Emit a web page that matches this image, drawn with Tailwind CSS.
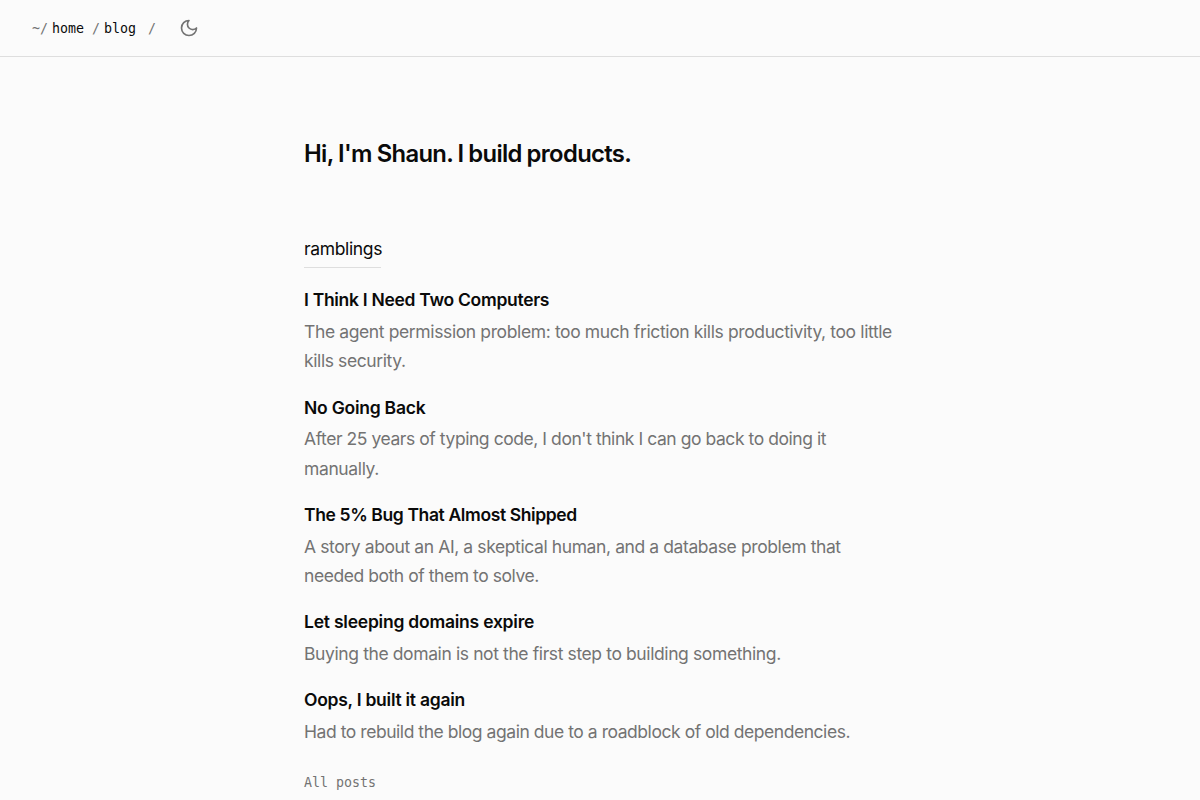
<!DOCTYPE html>
<html lang="en">
<head>
    <meta charset="UTF-8">
    <meta name="viewport" content="width=device-width, initial-scale=1.0">
    <title>Shaun</title>
    <script src="https://cdn.jsdelivr.net/npm/@tailwindcss/browser@4"></script>
</head>
<body class="h-screen overflow-hidden bg-[#fbfbfb] font-['Inter',sans-serif] text-[#0a0a0a]">

    <header class="flex h-[57px] items-center border-b border-[#dedede] px-8 font-['DejaVu_Sans_Mono',monospace] text-[13.3px] text-[#737373]">
        <nav class="flex items-center pt-0.5">
            <span>~/</span>
            <a href="#" class="ml-1 text-[#0a0a0a]">home</a>
            <span class="ml-2">/</span>
            <a href="#" class="ml-1 text-[#0a0a0a]">blog</a>
            <span class="ml-3">/</span>
        </nav>
        <button class="ml-[23px]" aria-label="Toggle theme">
            <svg class="size-5" viewBox="0 0 24 24" fill="none" stroke="currentColor" stroke-width="2" stroke-linecap="round" stroke-linejoin="round">
                <path d="M12 3a6 6 0 0 0 9 9 9 9 0 1 1-9-9Z"/>
            </svg>
        </button>
    </header>

    <main class="mx-auto w-[592px] pt-[81px] text-[17.5px] leading-[29.25px] whitespace-nowrap">
        <h1 class="text-[23.8px] leading-8 font-semibold tracking-[-0.65px] [word-spacing:-0.5px]">Hi, I'm Shaun. I build products.</h1>

        <section class="pt-16">
            <h2 class="mb-5 inline-block w-[77px] border-b border-[#dedede] pb-1 tracking-[-0.36px]">ramblings</h2>

            <div class="space-y-5">
                <article>
                    <h3 class="mb-1 leading-[24.75px] font-semibold tracking-[-0.3px]">I Think I Need Two Computers</h3>
                    <p class="text-[#737373]">
                        <span class="block tracking-[-0.38px]">The agent permission problem: too much friction kills productivity, too little</span>
                        <span class="block tracking-[-0.4px]">kills security.</span>
                    </p>
                </article>
                <article>
                    <h3 class="mb-1 leading-[24.75px] font-semibold tracking-[-0.24px]">No Going Back</h3>
                    <p class="text-[#737373]">
                        <span class="block tracking-[-0.44px]">After 25 years of typing code, I don't think I can go back to doing it</span>
                        <span class="block tracking-[-0.38px]">manually.</span>
                    </p>
                </article>
                <article>
                    <h3 class="mb-1 leading-[24.75px] font-semibold tracking-[-0.38px]">The 5% Bug That Almost Shipped</h3>
                    <p class="text-[#737373]">
                        <span class="block tracking-[-0.4px]">A story about an AI, a skeptical human, and a database problem that</span>
                        <span class="block tracking-[-0.44px]">needed both of them to solve.</span>
                    </p>
                </article>
                <article>
                    <h3 class="mb-1 leading-[24.75px] font-semibold tracking-[-0.23px]">Let sleeping domains expire</h3>
                    <p class="tracking-[-0.39px] text-[#737373]">Buying the domain is not the first step to building something.</p>
                </article>
                <article>
                    <h3 class="mb-1 leading-[24.75px] font-semibold tracking-[-0.26px]">Oops, I built it again</h3>
                    <p class="tracking-[-0.45px] text-[#737373]">Had to rebuild the blog again due to a roadblock of old dependencies.</p>
                </article>
            </div>

            <a href="#" class="mt-[22px] block font-['DejaVu_Sans_Mono',monospace] text-[13.3px] text-[#737373]">All posts</a>
        </section>
    </main>

</body>
</html>
